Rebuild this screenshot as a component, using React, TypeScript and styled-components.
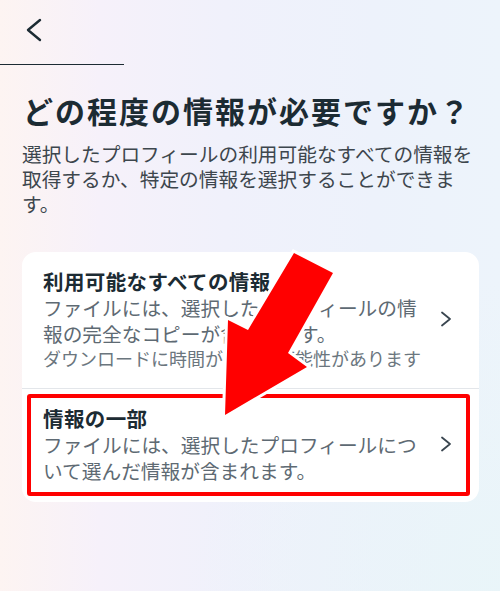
import React from 'react'
import styled, { createGlobalStyle } from 'styled-components'

const GlobalStyle = createGlobalStyle`
  html, body {
    margin: 0;
    padding: 0;
  }
  body {
    font-family: "Noto Sans CJK JP", "Noto Sans", sans-serif;
    color: #1c2b33;
  }
`

const Page = styled.div`
  position: relative;
  width: 500px;
  height: 591px;
  overflow: hidden;
  background:
    radial-gradient(circle at 100% 100%, rgba(232, 245, 248, 0.8) 0%, rgba(232, 245, 248, 0) 40%),
    linear-gradient(90deg, #fdf4f2 0%, #f6f1fa 20%, #f0f1fb 45%, #edf2fb 75%, #edf4fb 100%);
`

const Header = styled.header`
  width: 124px;
  height: 65px;
  padding-left: 26px;
  box-sizing: border-box;
  display: flex;
  align-items: center;
  border-bottom: 1.5px solid #1c2b33;
`

const BackButton = styled.button`
  display: flex;
  padding: 0;
  margin: 0 0 4px;
  border: 0;
  background: transparent;
`

const Title = styled.h1`
  margin: 26px 0 0;
  padding-left: 23px;
  font-size: 30px;
  line-height: 38px;
  font-weight: 700;
  letter-spacing: 2px;
  color: #1c2b33;
`

const Lead = styled.p`
  margin: 12px 0 0;
  padding-left: 22px;
  width: 460px;
  font-size: 19.7px;
  line-height: 25px;
  color: #3d464d;
`

const Card = styled.section`
  margin: 36px 21px 0 22px;
  background: #fff;
  border-radius: 14px;
  overflow: hidden;
`

const Row = styled.div<{ $top: number; $bottom: number }>`
  position: relative;
  display: flex;
  align-items: center;
  padding: ${({ $top }) => $top}px 27px ${({ $bottom }) => $bottom}px 21px;
  & + & {
    border-top: 1px solid #e3e6ea;
  }
`

const RowText = styled.div`
  width: 385px;
`

const RowTitle = styled.div`
  font-size: 20.5px;
  line-height: 28px;
  font-weight: 700;
  letter-spacing: 0.4px;
  color: #1c2b33;
`

const RowDesc = styled.div`
  font-size: 19.7px;
  line-height: 25.5px;
  color: #5e6a73;
`

const RowNote = styled.div`
  font-size: 18px;
  line-height: 24px;
  color: #6b767e;
`

const Chevron = styled.svg`
  margin-left: auto;
  flex: none;
`

const Highlight = styled.div`
  position: absolute;
  left: 5px;
  right: 9px;
  top: 5px;
  bottom: 6px;
  border: 4px solid #f00;
  border-radius: 3px;
  pointer-events: none;
`

const Arrow = styled.svg`
  position: absolute;
  left: 0;
  top: 0;
  pointer-events: none;
`

const arrowPoints = '294,253 333,273 288,353 307,367 225,415 228,320 248,330'

const RightChevron = () => (
  <Chevron width="12" height="16" viewBox="0 0 12 16">
    <polyline points="2,1.5 10,8 2,14.5" fill="none" stroke="#3a4650" strokeWidth="1.8" strokeLinecap="round" strokeLinejoin="round" />
  </Chevron>
)

export default function App() {
  return (
    <>
      <GlobalStyle />
      <Page>
        <Header>
          <BackButton aria-label="戻る">
            <svg width="16" height="24" viewBox="0 0 16 24">
              <polyline points="14,2 2,12 14,22" fill="none" stroke="#1c2b33" strokeWidth="2.4" strokeLinecap="round" strokeLinejoin="round" />
            </svg>
          </BackButton>
        </Header>
        <Title>どの程度の情報が必要ですか？</Title>
        <Lead>選択したプロフィールの利用可能なすべての情報を取得するか、特定の情報を選択することができます。</Lead>
        <Card>
          <Row $top={15} $bottom={18}>
            <RowText>
              <RowTitle>利用可能なすべての情報</RowTitle>
              <RowDesc>ファイルには、選択したプロフィールの情報の完全なコピーが含まれます。</RowDesc>
              <RowNote>ダウンロードに時間がかかる可能性があります</RowNote>
            </RowText>
            <RightChevron />
          </Row>
          <Row $top={15} $bottom={19}>
            <RowText>
              <RowTitle>情報の一部</RowTitle>
              <RowDesc>ファイルには、選択したプロフィールについて選んだ情報が含まれます。</RowDesc>
            </RowText>
            <RightChevron />
            <Highlight />
          </Row>
        </Card>
        <Arrow width="500" height="591" viewBox="0 0 500 591">
          <polygon points={arrowPoints} fill="#fff" stroke="#fff" strokeWidth="6" strokeLinejoin="miter" />
          <polygon points={arrowPoints} fill="#f00" />
        </Arrow>
      </Page>
    </>
  )
}
